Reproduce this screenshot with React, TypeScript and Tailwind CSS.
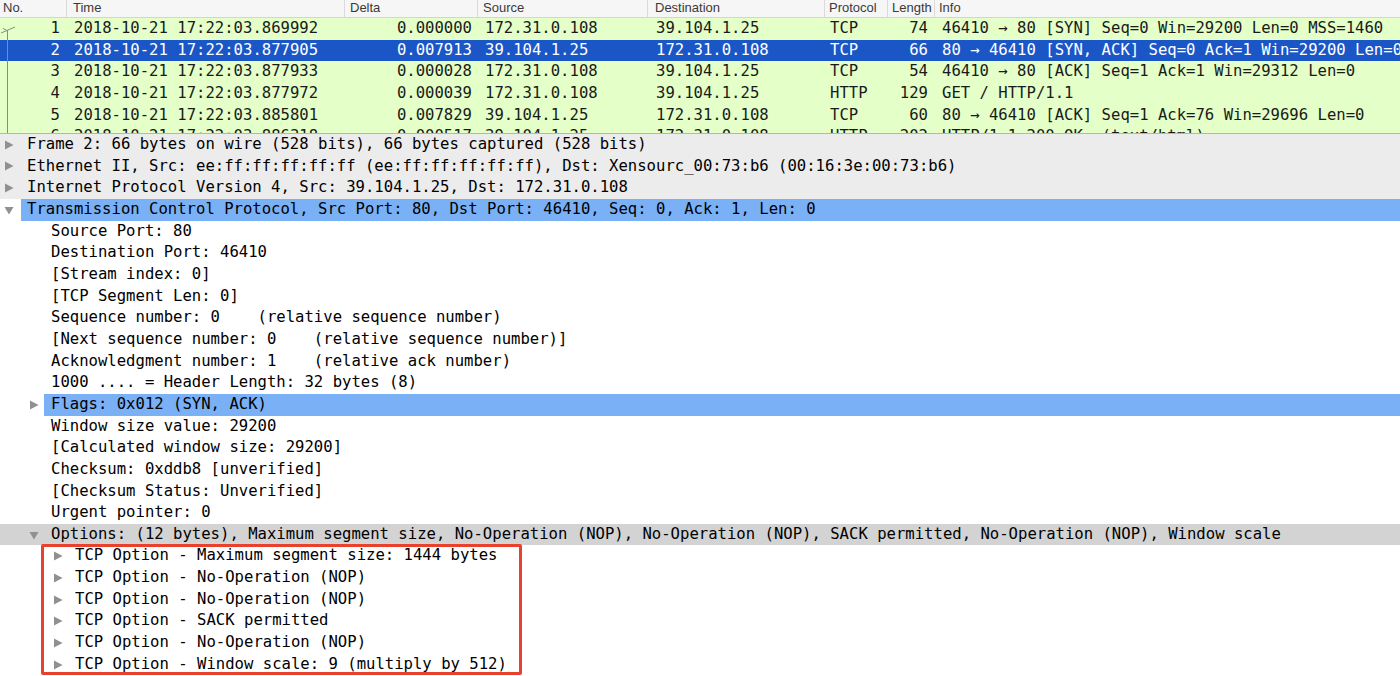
import React from 'react';

type Packet = {
  no: number;
  time: string;
  delta: string;
  src: string;
  dst: string;
  proto: string;
  len: number;
  info: string;
};

const packets: Packet[] = [
  { no: 1, time: '2018-10-21 17:22:03.869992', delta: '0.000000', src: '172.31.0.108', dst: '39.104.1.25', proto: 'TCP', len: 74, info: '46410 → 80 [SYN] Seq=0 Win=29200 Len=0 MSS=1460' },
  { no: 2, time: '2018-10-21 17:22:03.877905', delta: '0.007913', src: '39.104.1.25', dst: '172.31.0.108', proto: 'TCP', len: 66, info: '80 → 46410 [SYN, ACK] Seq=0 Ack=1 Win=29200 Len=0 MSS=1444 SACK_PERM=1 WS=512' },
  { no: 3, time: '2018-10-21 17:22:03.877933', delta: '0.000028', src: '172.31.0.108', dst: '39.104.1.25', proto: 'TCP', len: 54, info: '46410 → 80 [ACK] Seq=1 Ack=1 Win=29312 Len=0' },
  { no: 4, time: '2018-10-21 17:22:03.877972', delta: '0.000039', src: '172.31.0.108', dst: '39.104.1.25', proto: 'HTTP', len: 129, info: 'GET / HTTP/1.1 ' },
  { no: 5, time: '2018-10-21 17:22:03.885801', delta: '0.007829', src: '39.104.1.25', dst: '172.31.0.108', proto: 'TCP', len: 60, info: '80 → 46410 [ACK] Seq=1 Ack=76 Win=29696 Len=0' },
  { no: 6, time: '2018-10-21 17:22:03.886318', delta: '0.000517', src: '39.104.1.25', dst: '172.31.0.108', proto: 'HTTP', len: 202, info: 'HTTP/1.1 200 OK  (text/html)' },
];

type Node = {
  depth: number;
  text: string;
  arrow?: 'open' | 'closed';
  hl?: 'gray' | 'blue' | 'dark';
};

const tree: Node[] = [
  { depth: 0, arrow: 'closed', hl: 'gray', text: 'Frame 2: 66 bytes on wire (528 bits), 66 bytes captured (528 bits)' },
  { depth: 0, arrow: 'closed', hl: 'gray', text: 'Ethernet II, Src: ee:ff:ff:ff:ff:ff (ee:ff:ff:ff:ff:ff), Dst: Xensourc_00:73:b6 (00:16:3e:00:73:b6)' },
  { depth: 0, arrow: 'closed', hl: 'gray', text: 'Internet Protocol Version 4, Src: 39.104.1.25, Dst: 172.31.0.108' },
  { depth: 0, arrow: 'open', hl: 'blue', text: 'Transmission Control Protocol, Src Port: 80, Dst Port: 46410, Seq: 0, Ack: 1, Len: 0' },
  { depth: 1, text: 'Source Port: 80' },
  { depth: 1, text: 'Destination Port: 46410' },
  { depth: 1, text: '[Stream index: 0]' },
  { depth: 1, text: '[TCP Segment Len: 0]' },
  { depth: 1, text: 'Sequence number: 0    (relative sequence number)' },
  { depth: 1, text: '[Next sequence number: 0    (relative sequence number)]' },
  { depth: 1, text: 'Acknowledgment number: 1    (relative ack number)' },
  { depth: 1, text: '1000 .... = Header Length: 32 bytes (8)' },
  { depth: 1, arrow: 'closed', hl: 'blue', text: 'Flags: 0x012 (SYN, ACK)' },
  { depth: 1, text: 'Window size value: 29200' },
  { depth: 1, text: '[Calculated window size: 29200]' },
  { depth: 1, text: 'Checksum: 0xddb8 [unverified]' },
  { depth: 1, text: '[Checksum Status: Unverified]' },
  { depth: 1, text: 'Urgent pointer: 0' },
  { depth: 1, arrow: 'open', hl: 'dark', text: 'Options: (12 bytes), Maximum segment size, No-Operation (NOP), No-Operation (NOP), SACK permitted, No-Operation (NOP), Window scale' },
  { depth: 2, arrow: 'closed', text: 'TCP Option - Maximum segment size: 1444 bytes' },
  { depth: 2, arrow: 'closed', text: 'TCP Option - No-Operation (NOP)' },
  { depth: 2, arrow: 'closed', text: 'TCP Option - No-Operation (NOP)' },
  { depth: 2, arrow: 'closed', text: 'TCP Option - SACK permitted' },
  { depth: 2, arrow: 'closed', text: 'TCP Option - No-Operation (NOP)' },
  { depth: 2, arrow: 'closed', text: 'TCP Option - Window scale: 9 (multiply by 512)' },
];

const mono = "font-['DejaVu_Sans_Mono','Liberation_Mono',monospace] text-[15.6px]";

const Arrow = ({ open }: { open: boolean }) =>
  open ? (
    <svg width="12" height="12" viewBox="0 0 12 12" className="shrink-0">
      <path d="M1.5 3 L10.5 3 L6 10.5 Z" fill="#909090" />
    </svg>
  ) : (
    <svg width="12" height="12" viewBox="0 0 12 12" className="shrink-0">
      <path d="M2 1.5 L10.5 6 L2 10.5 Z" fill="#909090" />
    </svg>
  );

const cols = [
  { label: 'No.', w: 'w-[67px]', head: 'pl-[3px]' },
  { label: 'Time', w: 'w-[278px]', head: 'pl-[6px]' },
  { label: 'Delta', w: 'w-[133px]', head: 'pl-[5px]' },
  { label: 'Source', w: 'w-[170px]', head: 'pl-[5px]' },
  { label: 'Destination', w: 'w-[177px]', head: 'pl-[7px]' },
  { label: 'Protocol', w: 'w-[63px]', head: 'pl-[4px]' },
  { label: 'Length', w: 'w-[47px]', head: 'pl-[4px]' },
];

export default function App() {
  return (
    <div className="w-[1400px] h-[676px] overflow-hidden bg-white text-[#111]">
      {/* Packet list */}
      <div className="relative h-[134px] overflow-hidden border-b border-[#a9b8c8]">
        <div className="flex h-[18px] bg-[#f6f6f6] border-b border-[#d4d4d4] font-['Liberation_Sans',Arial,sans-serif] text-[13px] leading-[15px] text-[#3a3a3a]">
          {cols.map(c => (
            <div key={c.label} className={`${c.w} ${c.head} shrink-0 border-r border-[#dadada]`}>
              {c.label}
            </div>
          ))}
          <div className="flex-1 pl-[4px]">Info</div>
        </div>

        {packets.map(p => {
          const sel = p.no === 2;
          return (
            <div
              key={p.no}
              className={`flex h-[21.67px] leading-[21.67px] whitespace-pre ${mono} ${
                sel ? 'bg-[#1b56c7] text-white' : 'bg-[#e4ffc7] text-[#1a1a1a]'
              }`}
            >
              <div className="w-[67px] shrink-0 text-right pr-[7px]">{p.no}</div>
              <div className="w-[278px] shrink-0 pl-[7px]">{p.time}</div>
              <div className="w-[133px] shrink-0 text-right pr-[6px]">{p.delta}</div>
              <div className="w-[170px] shrink-0 pl-[7px]">{p.src}</div>
              <div className="w-[177px] shrink-0 pl-[8px]">{p.dst}</div>
              <div className="w-[63px] shrink-0 pl-[5px]">{p.proto}</div>
              <div className="w-[47px] shrink-0 text-right pr-[7px]">{p.len}</div>
              <div className="flex-1 overflow-hidden pl-[7px]">{p.info}</div>
            </div>
          );
        })}

        {/* related-packet indicator */}
        <svg className="absolute left-0 top-[18px]" width="20" height="116" viewBox="0 0 20 116">
          <path d="M1 15 L7 12.5 L15 9" stroke="#8a8a8a" strokeWidth="1" fill="none" />
          <path d="M3 10.5 L7 12.5" stroke="#8a8a8a" strokeWidth="1" fill="none" />
          <path d="M7.5 12.5 V116" stroke="#8a8a8a" strokeWidth="1" fill="none" />
        </svg>
      </div>

      {/* Details tree */}
      <div className="relative">
        {tree.map((n, i) => {
          const arrowLeft = n.depth === 0 ? 'pl-[3px]' : n.depth === 1 ? 'pl-[28px]' : 'pl-[52px]';
          const textLeft = n.depth === 0 ? 'left-[27px]' : n.depth === 1 ? 'left-[51px]' : 'left-[75px]';
          const bg =
            n.hl === 'gray'
              ? 'bg-[#ececec]'
              : n.hl === 'dark'
              ? 'bg-[#d3d3d3]'
              : '';
          return (
            <div key={i} className={`relative flex items-center h-[21.67px] ${bg} ${arrowLeft}`}>
              {n.hl === 'blue' && (
                <div
                  className={`absolute top-0 bottom-0 right-0 bg-[#7ab0f6] ${
                    n.depth === 0 ? 'left-[21px]' : 'left-[44px]'
                  }`}
                />
              )}
              {n.arrow && <Arrow open={n.arrow === 'open'} />}
              <span className={`absolute ${textLeft} top-0 leading-[21.67px] whitespace-pre ${mono} text-black`}>
                {n.text}
              </span>
            </div>
          );
        })}

        {/* annotation box */}
        <div className="absolute left-[41px] top-[410px] w-[481px] h-[131px] border-[3px] border-[#e8412e] rounded-[2px]" />
      </div>
    </div>
  );
}
